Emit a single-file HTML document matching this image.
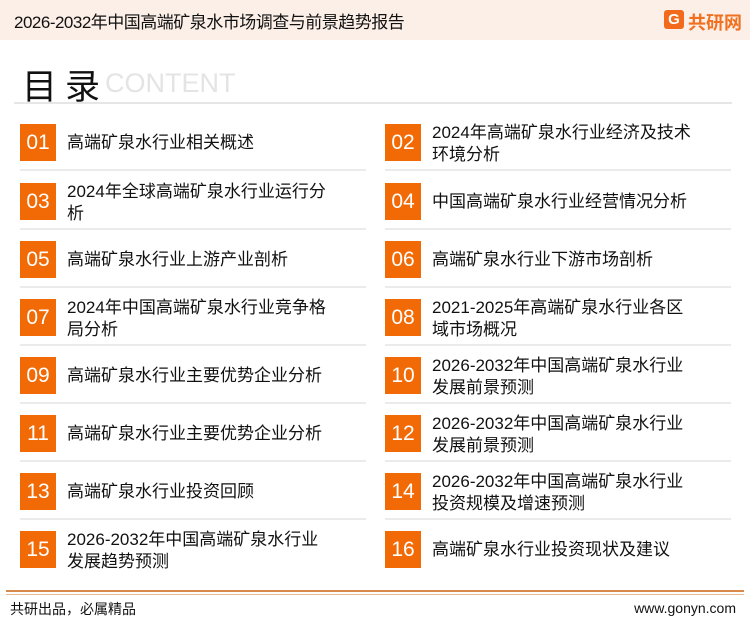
<!DOCTYPE html>
<html><head><meta charset="utf-8"><style>
*{margin:0;padding:0;box-sizing:border-box}
body{width:750px;height:622px;background:#fff;position:relative;overflow:hidden;font-family:"Liberation Sans","Noto Sans CJK SC",sans-serif;color:#111}
.hdr{position:absolute;left:0;top:0;width:750px;height:40px;background:#fcefe8}
.ttl{position:absolute;left:14px;top:8px;font-size:17px;letter-spacing:-0.5px}
.logo{position:absolute;left:688px;top:9px;font-size:18px;font-weight:bold;color:#f07020}
.g{position:absolute;left:664px;top:10px;width:20px;height:19px;border-radius:3px;background:#f26a1b;color:#fff;font-size:15px;text-align:center;line-height:19px;font-weight:bold}
.big{position:absolute;left:22px;top:59px;font-size:35px;letter-spacing:8px}
.ct{position:absolute;left:105px;top:68px;font-size:27px;color:#e4e4e4}
.hl{position:absolute;left:14px;top:102px;width:718px;height:2px;background:#e6e6e6}
.it{position:absolute;width:346px;height:47px;border-bottom:2px solid #ebebeb}
.n{position:absolute;left:0;top:0;width:36px;height:37px;background:#f26a06;color:#fff;font-size:21px;text-align:center;line-height:37px}
.t{position:absolute;left:47px;font-size:17px;line-height:22px;width:300px;white-space:nowrap}
.t1{top:8px}.t2{top:-2px}
.fl1{position:absolute;left:6px;top:590px;width:738px;height:2px;background:#d98a4a}
.fl2{position:absolute;left:6px;top:594px;width:738px;height:1px;background:#e8b890}
.fa{position:absolute;left:10px;top:599px;font-size:14px}
.fb{position:absolute;right:14px;top:600px;font-size:14px}
</style></head><body>
<div class="hdr"><div class="ttl">2026-2032年中国高端矿泉水市场调查与前景趋势报告</div><div class="g">G</div><div class="logo">共研网</div></div>
<div class="big">目录</div><div class="ct">CONTENT</div>
<div class="hl"></div>

<div class="it" style="left:20px;top:124px"><div class="n">01</div><div class="t t1">高端矿泉水行业相关概述</div></div>
<div class="it" style="left:385px;top:124px"><div class="n">02</div><div class="t t2">2024年高端矿泉水行业经济及技术<br>环境分析</div></div>
<div class="it" style="left:20px;top:183px"><div class="n">03</div><div class="t t2">2024年全球高端矿泉水行业运行分<br>析</div></div>
<div class="it" style="left:385px;top:183px"><div class="n">04</div><div class="t t1">中国高端矿泉水行业经营情况分析</div></div>
<div class="it" style="left:20px;top:241px"><div class="n">05</div><div class="t t1">高端矿泉水行业上游产业剖析</div></div>
<div class="it" style="left:385px;top:241px"><div class="n">06</div><div class="t t1">高端矿泉水行业下游市场剖析</div></div>
<div class="it" style="left:20px;top:299px"><div class="n">07</div><div class="t t2">2024年中国高端矿泉水行业竞争格<br>局分析</div></div>
<div class="it" style="left:385px;top:299px"><div class="n">08</div><div class="t t2">2021-2025年高端矿泉水行业各区<br>域市场概况</div></div>
<div class="it" style="left:20px;top:357px"><div class="n">09</div><div class="t t1">高端矿泉水行业主要优势企业分析</div></div>
<div class="it" style="left:385px;top:357px"><div class="n">10</div><div class="t t2">2026-2032年中国高端矿泉水行业<br>发展前景预测</div></div>
<div class="it" style="left:20px;top:415px"><div class="n">11</div><div class="t t1">高端矿泉水行业主要优势企业分析</div></div>
<div class="it" style="left:385px;top:415px"><div class="n">12</div><div class="t t2">2026-2032年中国高端矿泉水行业<br>发展前景预测</div></div>
<div class="it" style="left:20px;top:473px"><div class="n">13</div><div class="t t1">高端矿泉水行业投资回顾</div></div>
<div class="it" style="left:385px;top:473px"><div class="n">14</div><div class="t t2">2026-2032年中国高端矿泉水行业<br>投资规模及增速预测</div></div>
<div class="it" style="left:20px;top:531px;border:none"><div class="n">15</div><div class="t t2">2026-2032年中国高端矿泉水行业<br>发展趋势预测</div></div>
<div class="it" style="left:385px;top:531px;border:none"><div class="n">16</div><div class="t t1">高端矿泉水行业投资现状及建议</div></div>

<div class="fl1"></div><div class="fl2"></div>
<div class="fa">共研出品，必属精品</div><div class="fb">www.gonyn.com</div>
</body></html>
